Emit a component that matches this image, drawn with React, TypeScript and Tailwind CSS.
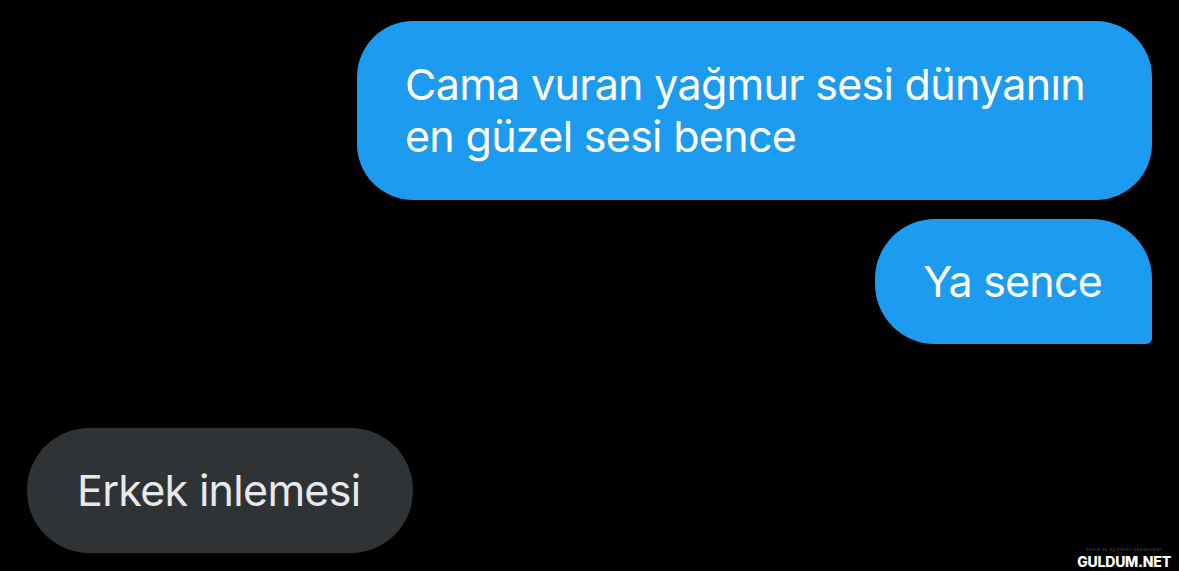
export default function App() {
  return (
    <div
      className="relative w-[1179px] h-[571px] overflow-hidden bg-black px-[27px] pt-[21px]"
      style={{ fontFamily: "Inter, 'Noto Sans', sans-serif" }}
    >
      <div className="flex flex-col">
        {/* sent */}
        <div className="flex justify-end">
          <div className="w-[795px] rounded-[56px] bg-[#1d9bf0] px-[48px] pt-[37px] pb-[38px] text-[43px] leading-[52px] text-white tracking-[-0.7px]">
            Cama vuran yağmur sesi dünyanın
            <br />
            en güzel sesi bence
          </div>
        </div>
        <div className="mt-[19px] flex justify-end">
          <div className="rounded-[60px] rounded-br-[6px] bg-[#1d9bf0] pl-[48px] pr-[50px] py-[36px] text-[43px] leading-[53px] text-white tracking-[-0.8px]">
            Ya sence
          </div>
        </div>

        {/* received */}
        <div className="mt-[84px] flex justify-start">
          <div className="rounded-[62px] bg-[#2f3336] pl-[50px] pr-[53px] py-[36px] text-[43px] leading-[53px] text-[#e7e9ea] tracking-[-0.7px]">
            Erkek inlemesi
          </div>
        </div>
      </div>

      {/* watermark */}
      <div className="absolute bottom-[2px] right-[8px] flex flex-col items-center leading-none">
        <span className="text-[4px] text-[#555] tracking-[0.6px]">komik ve eğlenceli paylaşımlar</span>
        <span className="mt-[3px] text-[14px] font-extrabold tracking-[-0.2px] text-white">GULDUM.NET</span>
      </div>
    </div>
  );
}
